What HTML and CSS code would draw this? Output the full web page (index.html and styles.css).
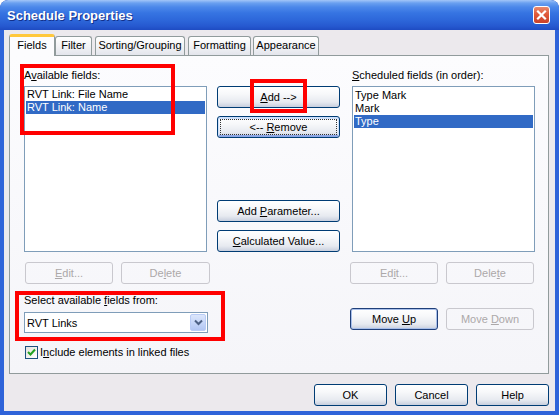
FILE: index.html
```html
<!DOCTYPE html>
<html>
<head>
<meta charset="utf-8">
<title>Schedule Properties</title>
<link rel="stylesheet" href="styles.css">
</head>
<body>
<div class="window">
  <div class="titlebar">
    <span class="title">Schedule Properties</span>
    <span class="close"><svg width="15" height="16" viewBox="0 0 15 16"><path d="M4 4.5 L11 11.5 M11 4.5 L4 11.5" stroke="#fff" stroke-width="2.2" stroke-linecap="square"/></svg></span>
  </div>
  <div class="frame">
    <div class="tabs">
      <div class="tab active w-fields">Fields</div>
      <div class="tab w-filter">Filter</div>
      <div class="tab w-sorting">Sorting/Grouping</div>
      <div class="tab w-formatting">Formatting</div>
      <div class="tab w-appearance">Appearance</div>
    </div>
    <div class="panel">
      <div class="col col-left">
        <div class="label">A<u>v</u>ailable fields:</div>
        <div class="listbox">
          <div class="item">RVT Link: File Name</div>
          <div class="item sel">RVT Link: Name</div>
        </div>
        <div class="btnrow left-edit">
          <div class="btn disabled w-edit-l"><span><u>E</u>dit...</span></div>
          <div class="btn disabled w-del-l"><span>De<u>l</u>ete</span></div>
        </div>
        <div class="label select-label">Select available <u>f</u>ields from:</div>
        <div class="combo">
          <span class="combo-text">RVT Links</span>
          <span class="combo-btn"><svg width="9" height="7" viewBox="0 0 9 7"><path d="M1 1.5 L4.5 5 L8 1.5" fill="none" stroke="#4D6185" stroke-width="2"/></svg></span>
        </div>
        <div class="check">
          <span class="box"><svg width="11" height="11" viewBox="0 0 11 11"><path d="M2 5 L4.5 7.5 L9 2.5" fill="none" stroke="#21A121" stroke-width="2"/></svg></span>
          <span>I<u>n</u>clude elements in linked files</span>
        </div>
      </div>
      <div class="col col-mid">
        <div class="btn btn-add"><span><u>A</u>dd --&gt;</span></div>
        <div class="btn btn-remove focused"><span>&lt;-- <u>R</u>emove</span></div>
        <div class="btn btn-param"><span>Add <u>P</u>arameter...</span></div>
        <div class="btn btn-calc"><span><u>C</u>alculated Value...</span></div>
      </div>
      <div class="col col-right">
        <div class="label"><u>S</u>cheduled fields (in order):</div>
        <div class="listbox listbox-right">
          <div class="item">Type Mark</div>
          <div class="item">Mark</div>
          <div class="item sel">Type</div>
        </div>
        <div class="btnrow right-edit">
          <div class="btn disabled w-edit-r"><span>Ed<u>i</u>t...</span></div>
          <div class="btn disabled w-del-r"><span>Dele<u>t</u>e</span></div>
        </div>
        <div class="btnrow move-row">
          <div class="btn default w-edit-r"><span>Move <u>U</u>p</span></div>
          <div class="btn disabled w-del-r"><span>Move <u>D</u>own</span></div>
        </div>
      </div>
    </div>
    <div class="footer">
      <div class="btn w-foot"><span>OK</span></div>
      <div class="btn w-foot"><span>Cancel</span></div>
      <div class="btn w-foot"><span>Help</span></div>
    </div>
  </div>
  <div class="mark mark-avail"></div>
  <div class="mark mark-add"></div>
  <div class="mark mark-select"></div>
</div>
</body>
</html>
```
FILE: styles.css
```css
* { box-sizing: border-box; }
html, body { margin: 0; padding: 0; background: #ffffff; }
body {
  font-family: "Liberation Sans", Arial, sans-serif;
  font-size: 11px;
  color: #000;
}
.window {
  position: relative;
  width: 559px;
  height: 415px;
  display: flex;
  flex-direction: column;
  border-radius: 8px 8px 0 0;
  overflow: hidden;
  background: #1F52C9;
}
.titlebar {
  height: 30px;
  flex: none;
  display: flex;
  align-items: center;
  justify-content: space-between;
  padding: 0 9px 0 7px;
  background: linear-gradient(180deg, #A3C6F8 0px, #6AA0F0 3px, #4C88EA 7px, #3674E2 13px, #2D67DA 20px, #2659D0 26px, #1E4BC2 30px);
  border-radius: 8px 8px 0 0;
}
.title {
  color: #fff;
  font: bold 13px "Liberation Sans", Arial, sans-serif;
  text-shadow: 1px 1px 0 #12308A;
}
.close {
  width: 17px;
  height: 18px;
  margin-top: -1px;
  display: flex;
  align-items: center;
  justify-content: center;
  border: 1px solid #fff;
  border-radius: 3px;
  background: linear-gradient(180deg, #E98A6E 0%, #E0593A 45%, #C9412A 100%);
}
.frame {
  flex: 1;
  display: flex;
  flex-direction: column;
  background: #ECE9ED;
  border-style: solid;
  border-color: #2F63D9;
  border-width: 0 4px 4px 4px;
}
.tabs {
  display: flex;
  align-items: flex-end;
  height: 21px;
  margin: 4px 0 0 5px;
}
.tab {
  height: 19px;
  border: 1px solid #919B9C;
  border-bottom: none;
  border-radius: 3px 3px 0 0;
  background: linear-gradient(180deg, #FFFFFF 0%, #F3F3F6 50%, #E3E5EC 100%);
  text-align: center;
  line-height: 17px;
  white-space: nowrap;
}
.tab.active {
  height: 22px;
  margin-bottom: -1px;
  position: relative;
  z-index: 1;
  background: #FCFCFE;
  border-top: 3px solid #FFC83C;
  line-height: 17px;
}
.w-fields { width: 46px; }
.w-filter { width: 37px; }
.w-sorting { width: 90px; margin-left: 3px; }
.w-formatting { width: 63px; margin-left: 3px; }
.w-appearance { width: 66px; margin-left: 2px; }

.panel {
  margin-left: 5px;
  width: 540px;
  height: 319px;
  flex: none;
  border: 1px solid #919B9C;
  background: linear-gradient(180deg, #FCFCFE 0%, #F5F5F9 100%);
  padding: 13px 0 0 14px;
  display: flex;
  align-items: flex-start;
}
.col { display: flex; flex-direction: column; }
.col-left { width: 186px; }
.col-mid { width: 123px; margin-left: 7px; padding-top: 17px; }
.col-right { width: 185px; margin-left: 10px; }

.label { line-height: 13px; height: 13px; margin-bottom: 4px; white-space: nowrap; }
.col-right .label { margin-left: 2px; }
.listbox {
  width: 183px;
  height: 166px;
  border: 1px solid #7F9DB9;
  background: #fff;
  padding: 1px;
}
.listbox-right { margin-left: 2px; padding-top: 2px; }
.item {
  height: 13px;
  line-height: 13px;
  padding-left: 1px;
  white-space: nowrap;
}
.item.sel { background: #316AC5; color: #fff; }

.btnrow { display: flex; gap: 8px; }
.left-edit { margin-top: 10px; margin-left: 1px; }
.right-edit { margin-top: 10px; }
.move-row { margin-top: 24px; }

.btn {
  height: 22px;
  display: flex;
  align-items: center;
  justify-content: center;
  border: 1px solid #003C74;
  border-radius: 3px;
  background: linear-gradient(180deg, #FFFFFF 0%, #F7F8FA 35%, #E7EAF0 75%, #C8CFDE 100%);
  white-space: nowrap;
}
.btn.disabled {
  border-color: #C9C8CE;
  background: transparent;
  color: #ACA8A9;
}
.btn.default { box-shadow: inset 0 0 0 1px #A8BFEA; border-color: #1F3F7A; }
.btn.focused {
  box-shadow: inset 0 1px 0 1px #CEE0FB, inset 0 -1px 0 1px #8CA7E6;
  outline: 1px dotted #333;
  outline-offset: -4px;
}
.w-edit-l { width: 88px; }
.w-del-l { width: 89px; }
.w-edit-r { width: 88px; }
.w-del-r { width: 88px; }
.btn-remove { margin-top: 8px; }
.btn-param { margin-top: 62px; }
.btn-calc { margin-top: 8px; }

.select-label { margin-top: 10px; margin-bottom: 5px; }
.combo {
  width: 184px;
  height: 21px;
  border: 1px solid #7F9DB9;
  background: #fff;
  display: flex;
  align-items: center;
  justify-content: space-between;
  padding: 0 1px 0 2px;
}
.combo-btn {
  width: 16px;
  height: 17px;
  display: flex;
  align-items: center;
  justify-content: center;
  border: 1px solid #B9CCF6;
  border-radius: 2px;
  background: linear-gradient(180deg, #DCE6FB 0%, #C3D4F8 60%, #B2C6F3 100%);
}
.check {
  margin-top: 13px;
  margin-left: 1px;
  display: flex;
  align-items: center;
  gap: 2px;
  line-height: 13px;
  white-space: nowrap;
}
.box {
  width: 13px;
  height: 13px;
  border: 1px solid #1C5180;
  background: linear-gradient(135deg, #E4E3DD 0%, #FFFFFF 100%);
  display: flex;
  align-items: center;
  justify-content: center;
}

.footer {
  display: flex;
  justify-content: flex-end;
  gap: 8px;
  margin-top: 10px;
  padding-right: 6px;
}
.w-foot { width: 73px; }

.mark {
  position: absolute;
  border: 4px solid #FF0000;
}
.mark-avail { left: 20px; top: 64px; width: 155px; height: 71px; }
.mark-add { left: 250px; top: 79px; width: 57px; height: 34px; }
.mark-select { left: 15px; top: 291px; width: 210px; height: 50px; }
```
